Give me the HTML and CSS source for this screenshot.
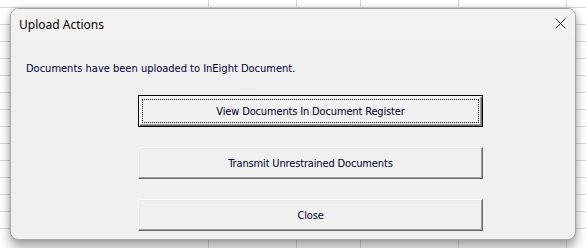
FILE: index.html
```html
<!DOCTYPE html>
<html>
<head>
<meta charset="utf-8">
<link rel="stylesheet" href="styles.css">
</head>
<body>
<div class="dialog">
  <div class="titlebar">
    <span class="title">Upload Actions</span>
    <svg class="close" width="11" height="11" viewBox="0 0 11 11"><path d="M0.5 0.5L10.5 10.5M10.5 0.5L0.5 10.5" stroke="#1a1a1a" stroke-width="1" fill="none"/></svg>
  </div>
  <div class="content">
    <p class="message">Documents have been uploaded to InEight Document.</p>
    <div class="buttons">
      <button class="btn default">View Documents In Document Register</button>
      <button class="btn">Transmit Unrestrained Documents</button>
      <button class="btn">Close</button>
    </div>
  </div>
</div>
</body>
</html>
```
FILE: styles.css
```css
html, body {
  margin: 0;
  height: 100%;
}
body {
  width: 586px;
  height: 248px;
  overflow: hidden;
  box-sizing: border-box;
  padding: 8px 0 0 10px;
  background-color: #ffffff;
  background-image:
    linear-gradient(#d8d8d8, #d8d8d8),
    linear-gradient(#d8d8d8, #d8d8d8),
    linear-gradient(#d8d8d8, #d8d8d8),
    linear-gradient(#d8d8d8, #d8d8d8),
    linear-gradient(#d8d8d8, #d8d8d8),
    repeating-linear-gradient(to bottom, transparent 0 16px, #d8d8d8 16px 17px);
  background-size: 1px 100%, 1px 100%, 1px 100%, 1px 100%, 1px 100%, 100% 100%;
  background-position: 208px 0, 296px 0, 360px 0, 458px 0, 566px 0, 0 -9px;
  background-repeat: no-repeat, no-repeat, no-repeat, no-repeat, no-repeat, repeat;
}
.dialog {
  width: 566px;
  height: 232px;
  box-sizing: border-box;
  border: 1px solid #a6a6a6;
  border-radius: 8px;
  background: #f0f0f0;
  overflow: hidden;
  box-shadow: 0 9px 12px rgba(0, 0, 0, 0.3), 0 0 6px rgba(0, 0, 0, 0.2);
  display: flex;
  flex-direction: column;
}
.titlebar {
  height: 30px;
  flex: none;
  background: #f4f2f0;
  display: flex;
  align-items: center;
  justify-content: space-between;
  padding: 0 9px 0 8px;
}
.title {
  font-family: "Noto Sans", "Open Sans", sans-serif;
  font-size: 12px;
  color: #000;
}
.close {
  display: block;
  margin-top: -1px;
}
.content {
  padding: 23px 0 0 15px;
}
.message {
  margin: 0;
  font-family: "DejaVu Sans Condensed", "DejaVu Sans", sans-serif;
  font-size: 11px;
  line-height: 13px;
  color: #00003a;
}
.buttons {
  margin: 20px 0 0 112px;
  display: flex;
  flex-direction: column;
  gap: 20px;
}
.btn {
  width: 345px;
  height: 32px;
  box-sizing: border-box;
  padding: 0;
  font-family: "DejaVu Sans Condensed", "DejaVu Sans", sans-serif;
  font-size: 11px;
  letter-spacing: -0.15px;
  color: #00002a;
  background: #f0f0f0;
  border: 1px solid;
  border-color: #ffffff #696969 #696969 #ffffff;
  box-shadow: inset -1px -1px 0 #a0a0a0, inset 1px 1px 0 #e8e8e8;
}
.btn.default {
  border: 1px solid #000;
  box-shadow: inset 1px 1px 0 #ffffff, inset -1px -1px 0 #696969, inset -2px -2px 0 #a0a0a0;
  outline: 1px dotted #000;
  outline-offset: -5px;
}
```
